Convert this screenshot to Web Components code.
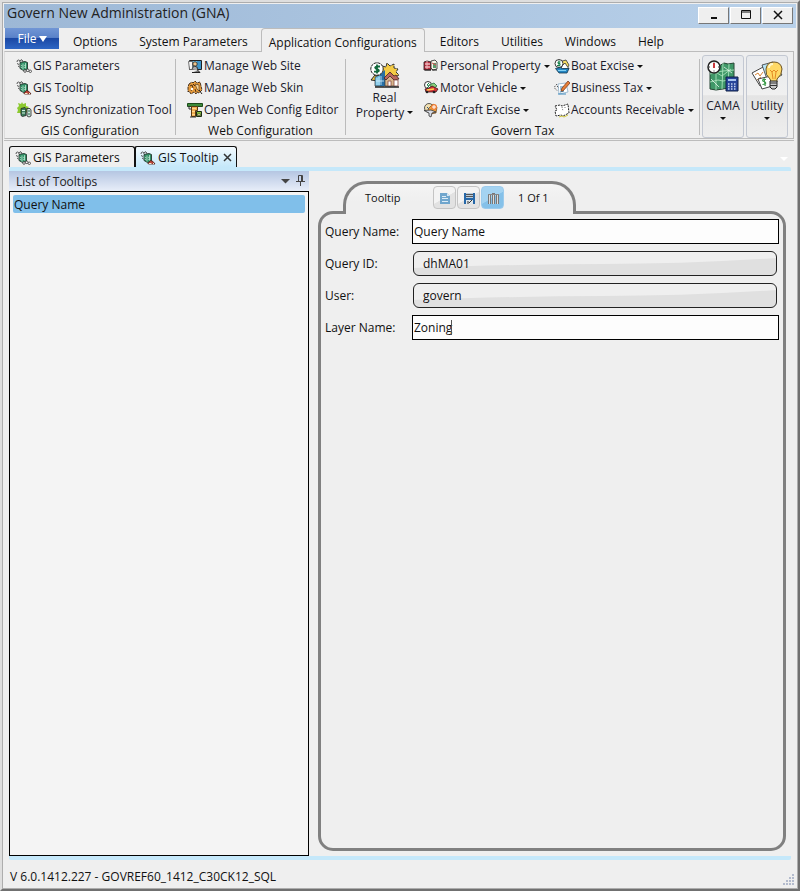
<!DOCTYPE html>
<html lang="en">
<head>
<meta charset="utf-8">
<title>Govern New Administration (GNA)</title>
<style>
html,body{margin:0;height:100%}
body{font:12px/16px "Open Sans","Noto Sans",sans-serif;color:#111;background:#efefef}
</style>
</head>
<body>
<gna-window></gna-window>
<script>
const define=(name,html,init)=>{
  const t=document.createElement('template');t.innerHTML=html;
  customElements.define(name,class extends HTMLElement{
    connectedCallback(){
      if(this.shadowRoot)return;
      const r=this.attachShadow({mode:'open'});
      r.append(t.content.cloneNode(true));
      if(init)init(this,r);
    }
  });
};

const bug='<path d="M4 3.500l5-1 2.500 1v7l-4 1-3.500-2z" fill="#2f8f66" stroke="#26382f" stroke-width=".9"/><path d="M7 4.500v6M9.500 4v5.500" stroke="#a5dcc0" stroke-width=".9"/><path d="M4.500 6l2 1M4.500 8l2 1M8 6.500l2-.5M8 8.500l2-.5" stroke="#d6f0e3" stroke-width=".6"/><path d="M1 3q0-2 1.500-2T4 3M4 2q1-2 2-1t1 2M1 4.500l2 1M2 7l1.500 1" fill="none" stroke="#444" stroke-width=".9"/>';
const ICONS={
 gis:['0 0 16 14',bug+'<circle cx="9" cy="12" r="1.300" fill="#fff" stroke="#333" stroke-width=".8"/><circle cx="11.800" cy="11.300" r="1.300" fill="#fff" stroke="#333" stroke-width=".8"/><circle cx="14.300" cy="12.300" r="1.200" fill="#fff" stroke="#333" stroke-width=".8"/>'],
 tip:['0 0 16 14',bug+'<path d="M8 12.500l2.500-3 2.500 1 2 2.500H8.500z" fill="#c2483c" stroke="#4a1a14" stroke-width=".8"/><path d="M9 12.500h2.500M13 12.500h1" stroke="#f8e7c8"/>'],
 sync:['0 0 16 16','<path d="M6 0l1 2 3-1v3l3 1-2 2 1 3-3 1-3 2-2-2-3 0 1-3-1-2 2-2-1-3 3 1z" fill="#8cc930"/><path d="M5 6.500l4-1 1 1v7l-3.500 1-1.500-1z" fill="#3b7d5c" stroke="#222" stroke-width=".8"/><path d="M6 8.500h3M6 11h3" stroke="#d5f1e0"/><path d="M11 6.500h3l1 1.500v6l-2 1-2-1z" fill="#cde5dc" stroke="#222" stroke-width=".8"/><path d="M12 9h2M12 12h2" stroke="#27694a"/>'],
 site:['0 0 16 16','<path d="M2.500 2.500h12v9h-12z" fill="#6cc3ea" stroke="#222"/><path d="M10 3h4v8h-4z" fill="#3f95c8"/><path d="M1.500 3.500h4v6l2 2h-5z" fill="#f4f4f4" stroke="#555" stroke-width=".8"/><circle cx="8" cy="6" r="2.200" fill="#f0c68c" stroke="#222" stroke-width=".8"/><path d="M5 11l2-3 3 1 1 4" fill="#aaa" stroke="#222" stroke-width=".8"/><path d="M5 14.500h8l-2-2" fill="#777" stroke="#222"/>'],
 skin:['0 0 16 16','<path d="M2 4l3-2 1 1 2-2 2 2 3-1 1 4 1 4-3 3-2-1-1 2-2-2-3 2-2-3-1 1 0-5z" fill="#e79b3b" stroke="#3a2412" stroke-width=".9" stroke-dasharray="3 .7"/><path d="M3 6l2-1 1 3-2 3M6 4l2 2M8 9l1 3M10 4v3" fill="none" stroke="#3a2412" stroke-width=".9"/><path d="M8 4l4 1v6l-2-2z" fill="#fbd79a" stroke="#62401c" stroke-width=".7"/><circle cx="5" cy="9" r="1.200" fill="#fff"/><path d="M12 10l3 4" stroke="#222"/>'],
 open:['0 0 16 16','<path d="M.5 1.500h15v3H.5z" fill="#3d8a38" stroke="#1d4a1c"/><path d="M4.500 4.500h6v4H8.500v6h-4z" fill="#f0ad50" stroke="#5a3a14"/><path d="M2 4v3h2" fill="none" stroke="#333"/><path d="M5 6.500h4M5 9.500h3M5 12.500h3" stroke="#ffd48c"/><path d="M9.500 9.500h5v5h-5z" fill="#83bf3f" stroke="#1b2b12"/><path d="M10.500 12h3v1.500h-3z" fill="#fff8ae" stroke="#222" stroke-width=".5"/><path d="M3 15h6" stroke="#333"/>'],
 real:['0 0 30 26','<path d="M12 4l4 1 1-4 3 3 4-2 0 4 4 1-2 3 3 3-4 2-15 1z" fill="#f4cb45" stroke="#333" stroke-dasharray="4 .7"/><path d="M1 18l4-5 4 1v5z" fill="#f5cf4b" stroke="#222"/><path d="M5 15l9-4v13H5z" fill="#68b9df" stroke="#333" stroke-width=".7"/><path d="M10 12l5-4v16h-5z" fill="#276fa5"/><path d="M7 16v7M9 15v8M11 14v9M6 19h8" stroke="#d7f2ff" stroke-width=".8"/><path d="M15 16l5-5 6 5v8H15z" fill="#d7b58b" stroke="#333" stroke-width=".7"/><path d="M14 16l6-6 4 4 2-1 3 4-5 1-4-4-4 4z" fill="#b9685f" stroke="#442020" stroke-width=".8"/><path d="M18 19h3v5h-3zM24 18h4v6h-4z" fill="#fff" stroke="#8b4a41" stroke-width=".8"/><circle cx="7" cy="7" r="6.200" fill="#fff" stroke="#222" stroke-dasharray="3 .6"/><path d="M10 4.500H6.500q-2.500 1-.5 2.200l2 .8q2 1.500-.5 2.200H4M7 2.500v9" fill="none" stroke="#11683c" stroke-width="1.800"/><path d="M5 25h24" stroke="#222" stroke-width="1.500"/>'],
 personal:['0 0 16 16','<path d="M1 4l3-1 4 1v8H1z" fill="#b82e3e" stroke="#24161a" stroke-width=".8"/><path d="M2 6h5M2 9h5" stroke="#fff" stroke-width="1.200"/><path d="M4 3v8" stroke="#f1b3b8"/><path d="M8 3l4-1 2 2v7l-4 1-2-2z" fill="#f6f3e7" stroke="#222" stroke-width=".8"/><path d="M10 5h3v5h-3z" fill="#579a6b"/><path d="M9 12h5M2 12h6" stroke="#222"/><path d="M9 5l4 2" stroke="#dc4f52"/>'],
 motor:['0 0 16 16','<circle cx="5" cy="5" r="3.500" fill="#fff" stroke="#222" stroke-width=".9"/><path d="M6 3L4 5l2 1-2 2" fill="none" stroke="#16804a"/><path d="M6 5l5-2 3 3-3 2z" fill="#8bd07d" stroke="#227040" stroke-width=".8"/><path d="M2 9l4-1 3-2 4 2 2 1-2 3H3z" fill="#cf3338" stroke="#41171b" stroke-width=".8"/><path d="M4 10l7-1" stroke="#ffd34f" stroke-width="1.500"/><circle cx="4" cy="12" r="1.300" fill="#222"/><circle cx="11" cy="12" r="1.300" fill="#222"/>'],
 air:['0 0 16 16','<circle cx="6" cy="6" r="4.500" fill="#f0dfb0" stroke="#333" stroke-width=".8"/><path d="M5 7l5-5 4 3-1 6-6 1z" fill="#f0a13a" stroke="#6c4320" stroke-width=".7"/><circle cx="11" cy="5" r="3" fill="#ee8038"/><path d="M11 3v4M9 5h4" stroke="#fff"/><path d="M1 8.500l7-.5 5 2-4 1-1 4-2-1v-3z" fill="#d8dce5" stroke="#333" stroke-width=".8"/><path d="M4 5l2 2" stroke="#35567e"/>'],
 boat:['0 0 16 16','<path d="M5 4l7-2 3 5-2 4H4z" fill="#f6dc62" stroke="#333" stroke-width=".8"/><path d="M8 8l3-3 4 6H7z" fill="#fff" stroke="#333" stroke-width=".8"/><circle cx="5" cy="5.500" r="4" fill="#fff" stroke="#222" stroke-width=".9"/><path d="M6.500 4H4v1.500h2v2H3M5 2.500v6" fill="none" stroke="#19834c"/><path d="M1.500 10.500l5-1 2 1h6.500l-2 4.500H5z" fill="#2385c2" stroke="#16384e" stroke-width=".8"/><path d="M4 12.500h8" stroke="#82d0f2"/>'],
 business:['0 0 16 16','<path d="M4 4l8-1 2 9-9 2z" fill="#fff" stroke="#8badc8" stroke-width=".8"/><path d="M6 7h4M6 9h4M6 12l4-1" stroke="#3e83ae"/><path d="M3 4L0 7.500l3 3M3 6l2 2" fill="none" stroke="#555" stroke-dasharray="1.500 1"/><path d="M14 1l2 2-7 8-2 0 1-3z" fill="#e77d35" stroke="#7b4024" stroke-width=".8"/><path d="M4 14h8" stroke="#3f8cc0"/>'],
 accounts:['0 0 16 16','<path d="M1 4l5-1 2 1 6-2 1 9-6 3-2-1-5 1-1-5 2-1z" fill="#fff" stroke="#222" stroke-dasharray="2 1"/><path d="M8 5l1 4M11 5v2" stroke="#444" stroke-dasharray="1 1" stroke-width=".7"/><path d="M5 15l3-1 2 1 4-2" fill="none" stroke="#d2c83c"/>'],
 cama:['0 0 32 32','<path d="M3 6l6-1 3 1 5-3 4 1 6-1v24l-6 1-5 1-7 1-6-1z" fill="#3f9868" stroke="#264635"/><path d="M9 6v24M16 3l-1 26M22 4l-1 24M3 14l7-2 6-1 11-1M3 22l8-2 5 1 10-2M5 10l10 6 9-7" fill="none" stroke="#a9e2bb" stroke-width=".9"/><path d="M4 19l8 8M17 7l8 6" stroke="#fff" stroke-width=".7"/><circle cx="7" cy="7" r="6" fill="#fff" stroke="#222" stroke-width="1.500"/><path d="M7 3v5" stroke="#c52429" stroke-width="1.800"/><path d="M7 1.500v1M7 10.500v1M2 7h1M11 7h1" stroke="#333"/><path d="M19 17h12v14H19z" fill="#27459a" stroke="#102047"/><path d="M21 19h8v2h-8z" fill="#a8c4f0"/><path d="M21 24h8M21 26.500h8M21 29h8" stroke="#c5d2ef" stroke-width="1.300" stroke-dasharray="1.500 1.500"/>'],
 utility:['0 0 32 32','<path d="M1 13l13-7 9 11-14 9z" fill="#fff" stroke="#444" stroke-width="1"/><path d="M4 15l3-2 2 3 3-4M6 20l4-3" fill="none" stroke="#d88434"/><path d="M11 5l11-3 9 13-14 7z" fill="#b9e5f8" stroke="#333" stroke-width=".8"/><path d="M7 19l13-3 5 9-14 4z" fill="#fff" stroke="#444"/><path d="M15 19.500h-3q-1 1.500 1 2t1.500 2.500l-3 .5M13 18l1.200 8" fill="none" stroke="#3c9b4a" stroke-width="1.200"/><path d="M19 19q-5-4-4-10 1-7 8-7t8 7q0 6-5 10v3h-6z" fill="#ffd966" stroke="#6c5425"/><path d="M18 8q0-4 4-4" fill="none" stroke="#fff6c9" stroke-width="2"/><path d="M19 10l2 2 2-2 2 2 2-2M21 12l1 7M25 12l-1 7" fill="none" stroke="#e48b24"/><path d="M19 21h7v6l-2 2h-3l-2-2z" fill="#ccc" stroke="#222"/><path d="M19 23h7M19 25.500h7" stroke="#333"/>'],
 page:['0 0 16 16','<path d="M3 3h7l3 3v8H3z" fill="#70a6cd"/><path d="M10 3l3 3h-3z" fill="#d5e6f3"/><path d="M5 6.500h4M5 8.500h6M5 11.500h6" stroke="#dcecf7"/>'],
 save:['0 0 16 16','<path d="M3 3h11v11H3z" fill="#2768a8"/><path d="M5 3h7v5H5z" fill="#b8cbdc"/><path d="M5 4.500h7M5 6.500h7" stroke="#555"/><path d="M5 10h7v4H5z" fill="#dfe7ec"/><path d="M8 13l3-3M7 11v3" stroke="#333"/>'],
 trash:['0 0 16 16','<path d="M3 4h3v10H3zM7 3h3v11H7zM11 4h3v10h-3z" fill="#777"/><path d="M4.500 5v9M8.500 4v10M12.500 5v9" stroke="#ddd"/><path d="M3 4.500h11" stroke="#888"/>']
};
define('gna-icon',`<style>:host{display:block;flex:none;width:16px;height:16px}svg{display:block;width:100%;height:100%}</style>`,(e,r)=>{
  const [vb,art]=ICONS[e.getAttribute('name')];
  r.innerHTML+=`<svg viewBox="${vb}" fill="none" aria-hidden="true">${art}</svg>`;
});

define('title-bar',`<style>
:host{display:flex;align-items:center;height:24px;background:linear-gradient(90deg,#9db8d6,#b9d1ea);padding-left:3px}
h1{font:14px/18px "Open Sans","Noto Sans",sans-serif;margin:0 auto 6px 0;color:#222}
button{box-sizing:border-box;width:31px;height:17px;margin:0 0 0 1px;padding:0;display:grid;place-items:center;background:#efefef;border:1px solid;border-color:#fff #777 #777 #fff}
nav{display:flex;padding:0 3px 2px 0}svg{width:14px;height:12px}
</style><h1><slot></slot></h1><nav>
<button aria-label="Minimize"><svg viewBox="0 0 14 12"><path d="M4 9h6" stroke="#111" stroke-width="2"/></svg></button>
<button aria-label="Maximize"><svg viewBox="0 0 14 12"><path d="M2.500 1.500h9v8h-9zM3 3h9" stroke="#111" fill="none"/></svg></button>
<button aria-label="Close"><svg viewBox="0 0 14 12"><path d="M3 2l8 8M11 2l-8 8" stroke="#111" stroke-width="1.500"/></svg></button></nav>`);

define('menu-tab',`<style>
:host{display:block}button{font:inherit;color:inherit;box-sizing:border-box;height:24px;padding:4px 10px 0;border:1px solid transparent;background:none;white-space:nowrap;display:flex;align-items:center;justify-content:center}
:host([active]){margin:0 4px 0 2px;z-index:1}:host([active]) button{padding:4px 7px 0;border-color:#bcbcbc;border-bottom:0;border-radius:4px 4px 0 0;background:#efefef}
:host([file]){margin-right:3px}:host([file]) button{gap:2px;width:54px;height:21px;color:#fff;padding:0;border:0;background:linear-gradient(#7196d5,#5a82c9 45%,#1b48a4 50%,#2e66c4)}
i{display:none;border:4px solid transparent;border-top:6px solid #fff;border-bottom:0}:host([file]) i{display:block}
</style><button><slot></slot><i></i></button>`);

define('ribbon-button',`<style>
:host{display:block}button{font:inherit;color:#1b1b2b;display:flex;align-items:center;gap:1px;height:22px;padding:0;border:0;background:none;white-space:nowrap}
i{display:none;border:3px solid transparent;border-top-color:#111;border-bottom:0;margin-left:2px}:host([menu]) i{display:block}
</style><button><span id="icon"></span><span><slot></slot></span><i></i></button>`,(e,r)=>{
  const m=document.createElement('gna-icon');m.setAttribute('name',e.getAttribute('icon'));r.querySelector('#icon').replaceWith(m);
});

define('ribbon-large',`<style>
:host{display:block}button{font:inherit;line-height:15px;color:#1b1b2b;width:100%;padding:0;border:0;background:none;display:flex;flex-direction:column;align-items:center;white-space:nowrap}
gna-icon{width:30px;height:26px;margin-bottom:2px}
i{border:3px solid transparent;border-top-color:#111;border-bottom:0}
div{display:flex;align-items:center;gap:3px}
:host([boxed]) button{box-sizing:border-box;width:42px;height:83px;padding-top:4px;border:1px solid #c3c8d2;border-radius:3px;background:linear-gradient(#e8eaed,#f0f0f0 48%,#e4e4e4 49%,#eee)}
:host([boxed]) gna-icon{width:32px;height:32px;margin-bottom:6px}
:host([boxed]) div{flex-direction:column;gap:4px}
</style><button><span id="icon"></span><slot name="first"></slot><div><slot></slot><i></i></div></button>`,(e,r)=>{
  const m=document.createElement('gna-icon');m.setAttribute('name',e.getAttribute('icon'));r.querySelector('#icon').replaceWith(m);
});

define('ribbon-group',`<style>
:host{display:flex;flex-direction:column;box-sizing:border-box;height:76px;margin-top:7px;border-right:1px solid #bbb;padding-left:11px}
main{display:flex;height:68px;flex:none;margin-top:-4px}
footer{text-align:center;margin-left:-11px;line-height:16px}
</style><main><slot></slot></main><footer><slot name="caption"></slot></footer>`);

define('gna-ribbon',`<style>
:host{display:block;margin:0 3px 0 0}
nav{display:flex;margin:0 0 -1px 1px;position:relative}
section{border:1px solid #bcbcbc;border-left-color:#ddd;height:88px;box-shadow:0 1px #efefef,0 2px #bcbcbc;margin-bottom:2px;display:grid;grid-template-columns:171px 170px 354px auto;box-sizing:border-box;justify-content:start}
.real{width:77px;margin:7px 0 0 -11px}.real+.col{width:131px}
.boxes{display:flex;gap:2px;padding:3px 0 0 2px}
</style><nav><menu-tab file>File</menu-tab><menu-tab>Options</menu-tab><menu-tab>System Parameters</menu-tab><menu-tab active>Application Configurations</menu-tab><menu-tab>Editors</menu-tab><menu-tab>Utilities</menu-tab><menu-tab>Windows</menu-tab><menu-tab>Help</menu-tab></nav>
<section>
<ribbon-group><div class="col"><ribbon-button icon="gis">GIS Parameters</ribbon-button><ribbon-button icon="tip">GIS Tooltip</ribbon-button><ribbon-button icon="sync">GIS Synchronization Tool</ribbon-button></div><span slot="caption">GIS Configuration</span></ribbon-group>
<ribbon-group><div class="col"><ribbon-button icon="site">Manage Web Site</ribbon-button><ribbon-button icon="skin">Manage Web Skin</ribbon-button><ribbon-button icon="open">Open Web Config Editor</ribbon-button></div><span slot="caption">Web Configuration</span></ribbon-group>
<ribbon-group><ribbon-large class="real" icon="real"><span slot="first">Real</span>Property</ribbon-large>
<div class="col"><ribbon-button menu icon="personal">Personal Property</ribbon-button><ribbon-button menu icon="motor">Motor Vehicle</ribbon-button><ribbon-button menu icon="air">AirCraft Excise</ribbon-button></div>
<div class="col"><ribbon-button menu icon="boat">Boat Excise</ribbon-button><ribbon-button menu icon="business">Business Tax</ribbon-button><ribbon-button menu icon="accounts">Accounts Receivable</ribbon-button></div><span slot="caption">Govern Tax</span></ribbon-group>
<div class="boxes"><ribbon-large boxed icon="cama">CAMA</ribbon-large><ribbon-large boxed icon="utility">Utility</ribbon-large></div>
</section>`);

define('doc-tab',`<style>
:host{display:flex;align-items:center;box-sizing:border-box;height:21px;border:solid #111;border-width:1px 1px 0;border-radius:3px 3px 0 0;padding:1px 5px 0;width:126px;white-space:nowrap}
:host([active]){width:103px;margin-left:-1px;border-width:1px 1px 0 2px;background:linear-gradient(#f3fafe,#c5e8fa);padding:1px 4px 0}
button{font:inherit;color:inherit;background:none;border:0;padding:0;display:flex;align-items:center;gap:2px}
.x{display:none;margin-left:auto}:host([active]) .x{display:block}svg{display:block;width:9px;height:9px}
</style><button><slot name="icon"></slot><span><slot></slot></span></button><button class="x" aria-label="Close tab"><svg viewBox="0 0 9 9"><path d="M1 1l7 7M8 1l-7 7" stroke="#333" stroke-width="1.500"/></svg></button>`);

define('tooltip-list',`<style>
:host{display:flex;flex-direction:column;width:300px}
header{display:flex;align-items:center;height:20px;padding:0 4px 0 7px;background:linear-gradient(#b5c6e2,#e8eef9)}
h2{font:inherit;margin:2px auto 0 0;color:#222}
button{font:inherit;border:0;background:none;padding:0}
header button{margin-left:6px}header button+button{margin-bottom:3px}header svg{display:block}
ul{box-sizing:border-box;flex:1;margin:0;padding:3px;list-style:none;border:1px solid #000;background:#f4f4f4}
li button{display:block;width:100%;height:18px;text-align:left;background:#80bfea;border-radius:2px;color:#111;padding:1px 0 0 1px}
</style><header><h2>List of Tooltips</h2><button aria-label="Menu"><svg width="9" height="5"><path d="M0 0h9l-4.500 4.500z" fill="#444"/></svg></button><button aria-label="Pin"><svg width="9" height="12" viewBox="0 0 9 12"><path d="M2.500 7V1.500h4V7M0 7.500h9M4.500 8v4M5.500 2v5" fill="none" stroke="#444"/></svg></button></header>
<ul><li><button>Query Name</button></li></ul>`);

define('gna-field',`<style>
:host{display:grid;grid-template-columns:87px 1fr;align-items:center;height:25px}
.box{display:grid;position:relative;height:25px}
svg,input{grid-area:1/1;width:100%;height:25px;box-sizing:border-box;margin:0}
input{font:inherit;color:#111;border:1px solid #000;background:#fdfdfd;padding:0 1px;outline:0;min-width:0}
svg{display:none;border-radius:6px;background:#efefef}
:host([locked]) .box{margin:0 2px 0 1px}
:host([locked]) svg{display:block}
:host([locked]) input{background:none;border-color:#222;border-radius:6px;padding-left:9px;position:relative}
i{display:none;position:absolute;left:39px;top:5px;width:1px;height:15px;background:#555}:host([caret]) i{display:block}
</style><label for="v"></label><div class="box"><svg viewBox="0 0 364 25" preserveAspectRatio="none" aria-hidden="true"><path d="M0 17Q110 13 190 13T364 7V25H0z" fill="#e0e0e0"/></svg><input id="v"><i></i></div>`,(e,r)=>{
  r.querySelector('label').textContent=e.getAttribute('label');
  const i=r.querySelector('input');i.value=e.getAttribute('value');i.readOnly=e.hasAttribute('locked');
});

define('record-form',`<style>
:host{display:flex;flex-direction:column;flex:1;min-width:0;margin:10px 5px 5px 9px}
header{box-sizing:border-box;display:flex;align-items:center;width:233px;height:33px;margin:0 0 -3px 25px;border:3px solid #808080;border-bottom:0;border-radius:24px 24px 0 0;background:linear-gradient(#f4f4f4,#efefef 60%);z-index:1;padding:0 0 3px 19px}
h2{font:11px/16px "Open Sans","Noto Sans",sans-serif;margin:0;flex:0 0 68px}
header span{margin-left:13px;font-size:11px;white-space:nowrap}
header button{flex:none;box-sizing:border-box;width:23px;height:23px;margin-right:1px;display:grid;place-items:center;border:1px solid #c4c4c4;border-radius:4px;padding:0;background:linear-gradient(150deg,#f3f3f3 50%,#e2e2e2 52%)}
header button.on{border-color:#9ccbec;background:linear-gradient(150deg,#a4d3f1 50%,#85c1e9 52%)}
form{box-sizing:border-box;flex:1;border:3px solid #808080;border-radius:15px;padding:5px 4px;display:flex;flex-direction:column;gap:7px}
</style><header><h2>Tooltip</h2><button aria-label="New"><gna-icon name="page"></gna-icon></button><button aria-label="Save"><gna-icon name="save"></gna-icon></button><button class="on" aria-label="Delete"><gna-icon name="trash"></gna-icon></button><span>1 Of 1</span></header>
<form><gna-field label="Query Name:" value="Query Name"></gna-field><gna-field locked label="Query ID:" value="dhMA01"></gna-field><gna-field locked label="User:" value="govern"></gna-field><gna-field caret label="Layer Name:" value="Zoning"></gna-field></form>`);

define('status-bar',`<style>
:host{display:flex;align-items:center;justify-content:space-between;height:28px;padding:5px 2px 0 6px;box-sizing:border-box}
svg{align-self:flex-end;margin-bottom:2px}
</style><span><slot></slot></span><svg width="12" height="12"><path d="M9 1h2M6 4h2M9 4h2M3 7h2M6 7h2M9 7h2M0 10h2M3 10h2M6 10h2M9 10h2" stroke="#b3bbcd" stroke-width="2"/></svg>`);

define('gna-window',`<style>
:host{display:flex;flex-direction:column;box-sizing:border-box;min-height:100vh;border:2px solid;border-color:#dedede #707070 #707070 #dedede;background:#efefef}
.frame{display:flex;flex-direction:column;flex:1;border:1px solid #adadad;padding:1px 0 0 1px}
title-bar{margin-right:1px}
.tabs{display:flex;align-items:flex-end;margin:5px 0 0 5px}
.menu{margin:0 9px 6px auto;border:4px solid transparent;border-top-color:#fff;border-bottom:0}
.work{flex:1;display:flex;margin:0 6px 0 5px;border:solid #c5e8fa;border-width:4px 0;border-radius:2px}
</style><div class="frame"><title-bar>Govern New Administration (GNA)</title-bar><gna-ribbon></gna-ribbon>
<div class="tabs"><doc-tab><gna-icon slot="icon" name="gis"></gna-icon>GIS Parameters</doc-tab><doc-tab active><gna-icon slot="icon" name="tip"></gna-icon>GIS Tooltip</doc-tab><i class="menu"></i></div>
<div class="work"><tooltip-list></tooltip-list><record-form></record-form></div>
<status-bar>V 6.0.1412.227 - GOVREF60_1412_C30CK12_SQL</status-bar></div>`);
</script>
</body>
</html>
